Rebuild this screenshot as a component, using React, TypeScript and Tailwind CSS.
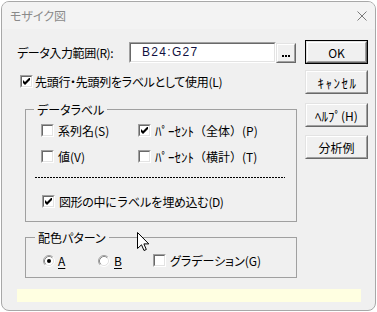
import React from "react";

function Check({ checked = false }: { checked?: boolean }) {
  return (
    <span className="flex h-[13px] w-[13px] shrink-0 border border-t-[#a0a0a0] border-l-[#a0a0a0] border-r-white border-b-white">
      <span className="flex flex-1 items-center justify-center border border-t-[#696969] border-l-[#696969] border-r-[#e3e3e3] border-b-[#e3e3e3] bg-white">
        {checked ? (
          <svg width="7" height="7" viewBox="0 0 7 7">
            <polygon points="0,2 2,4 7,-1 7,2 2,7 0,5" fill="#000" />
          </svg>
        ) : null}
      </span>
    </span>
  );
}

function Radio({ checked = false }: { checked?: boolean }) {
  return (
    <svg width="12" height="12" viewBox="0 0 12 12" className="shrink-0">
      <circle cx="6" cy="6" r="4.5" fill="#fff" />
      <path d="M2.11 9.89 A5.5 5.5 0 0 1 9.89 2.11" fill="none" stroke="#a0a0a0" />
      <path d="M9.89 2.11 A5.5 5.5 0 0 1 2.11 9.89" fill="none" stroke="#ffffff" />
      <path d="M2.82 9.18 A4.5 4.5 0 0 1 9.18 2.82" fill="none" stroke="#8a8a8a" />
      <path d="M9.18 2.82 A4.5 4.5 0 0 1 2.82 9.18" fill="none" stroke="#e3e3e3" />
      {checked ? <circle cx="6" cy="6" r="2" fill="#000" /> : null}
    </svg>
  );
}

function Btn({
  children,
  def = false,
  className = "",
}: {
  children?: React.ReactNode;
  def?: boolean;
  className?: string;
}) {
  const face = (
    <div className="flex h-full w-full border border-t-[#e3e3e3] border-l-[#e3e3e3] border-r-[#696969] border-b-[#696969]">
      <div className="flex flex-1 items-center justify-center border border-t-white border-l-white border-r-[#a0a0a0] border-b-[#a0a0a0] bg-[#f0f0f0]">
        {children}
      </div>
    </div>
  );
  return def ? (
    <div className={"border border-black " + className}>{face}</div>
  ) : (
    <div className={className}>{face}</div>
  );
}

export default function App() {
  return (
    <div className="relative h-[312px] w-[377px] overflow-hidden bg-white text-[12px] leading-[13px] text-black [font-family:'Noto_Sans_CJK_JP',sans-serif]">
      <div className="ml-[1px] mt-[1px] flex h-[310px] w-[375px] flex-col overflow-hidden rounded-[8px] border border-[#a8a8a8] bg-[#f0f0f0]">
        {/* title bar */}
        <div className="flex h-[27px] shrink-0 items-center justify-between bg-[#f3f3f3] pl-[8px] pr-[8px]">
          <span className="text-[#8a8a8a] [font-feature-settings:'palt']">モザイク図</span>
          <svg width="10" height="10" viewBox="0 0 10 10">
            <path d="M0.5 0.5 L9.5 9.5 M9.5 0.5 L0.5 9.5" stroke="#7a7a7a" strokeWidth="1" />
          </svg>
        </div>

        {/* body */}
        <div className="flex flex-col pl-[15px] pt-[11px]">
          <div className="flex">
            {/* left column */}
            <div className="flex w-[288px] flex-col">
              <div className="flex h-[24px] items-start">
                <span className="w-[112px] self-center tracking-[-0.4px] [font-feature-settings:'palt']">データ入力範囲(R):</span>
                <div className="mt-[2px] flex h-[21px] w-[147px] border border-t-[#a0a0a0] border-l-[#a0a0a0] border-r-white border-b-white">
                  <div className="flex flex-1 items-center border border-t-[#696969] border-l-[#696969] border-r-[#e3e3e3] border-b-[#e3e3e3] bg-white pl-[11px]">
                    <span className="text-[12px] tracking-[1.3px] text-[#101040] [font-family:'Liberation_Sans',sans-serif]">
                      B24:G27
                    </span>
                  </div>
                </div>
                <Btn className="mt-[3px] h-[20px] w-[20px]">
                  <div className="flex h-full w-full items-end justify-center gap-[1px] pb-[4px]">
                    <span className="h-[2px] w-[2px] bg-black" />
                    <span className="h-[2px] w-[2px] bg-black" />
                    <span className="h-[2px] w-[2px] bg-black" />
                  </div>
                </Btn>
              </div>

              <div className="mt-[11px] flex h-[13px] items-center pl-[3px]">
                <Check checked />
                <span className="ml-[2px] tracking-[-0.3px] [font-feature-settings:'palt']">先頭行・先頭列をラベルとして使用(L)</span>
              </div>

              {/* データラベル */}
              <fieldset className="ml-[8px] mt-[14px] w-[272px] border border-[#a0a0a0] p-0">
                <legend className="ml-[8px] px-[3px] leading-[15px] [font-feature-settings:'palt']">データラベル</legend>
                <div className="flex flex-col pb-[13px] pt-[7px]">
                  <div className="flex h-[13px] items-center pl-[15px]">
                    <div className="flex w-[97px] items-center">
                      <Check />
                      <span className="ml-[4px]">系列名(S)</span>
                    </div>
                    <div className="flex items-center">
                      <Check checked />
                      <span className="ml-[4px]">
                        <span className="text-[13px]">ﾊﾟｰｾﾝﾄ</span>（全体）(P)
                      </span>
                    </div>
                  </div>
                  <div className="mt-[13px] flex h-[13px] items-center pl-[15px]">
                    <div className="flex w-[97px] items-center">
                      <Check />
                      <span className="ml-[4px]">値(V)</span>
                    </div>
                    <div className="flex items-center">
                      <Check />
                      <span className="ml-[4px]">
                        <span className="text-[13px]">ﾊﾟｰｾﾝﾄ</span>（横計）(T)
                      </span>
                    </div>
                  </div>
                  <div className="ml-[9px] mt-[14px] h-[1px] w-[250px] bg-[repeating-linear-gradient(90deg,#000_0px,#000_2px,transparent_2px,transparent_3px)]" />
                  <div className="mt-[17px] flex h-[13px] items-center pl-[16px]">
                    <Check checked />
                    <span className="ml-[4px] tracking-[-0.5px]">図形の中にラベルを埋め込む(D)</span>
                  </div>
                </div>
              </fieldset>

              {/* 配色パターン */}
              <fieldset className="ml-[8px] mt-[8px] w-[272px] border border-[#a0a0a0] p-0">
                <legend className="ml-[9px] px-[3px] leading-[15px] [font-feature-settings:'palt']">配色パターン</legend>
                <div className="flex h-[32px] items-start pl-[17px] pt-[9px]">
                  <div className="flex h-[13px] items-center">
                    <div className="flex w-[55px] items-center">
                      <Radio checked />
                      <span className="ml-[3px] underline underline-offset-[2px]">A</span>
                    </div>
                    <div className="flex w-[55px] items-center">
                      <Radio />
                      <span className="ml-[4px] underline underline-offset-[2px]">B</span>
                    </div>
                    <div className="flex items-center">
                      <Check />
                      <span className="ml-[4px] [font-feature-settings:'palt']">グラデーション(G)</span>
                    </div>
                  </div>
                </div>
              </fieldset>
            </div>

            {/* right column */}
            <div className="flex w-[63px] flex-col">
              <Btn def className="h-[24px] w-[63px]">
                <span>OK</span>
              </Btn>
              <Btn className="mt-[6px] h-[24px] w-[63px]">
                <span className="pl-[2px] text-[13px] tracking-[1.5px]">ｷｬﾝｾﾙ</span>
              </Btn>
              <Btn className="mt-[9px] h-[24px] w-[63px]">
                <span>
                  <span className="text-[13px]">ﾍﾙﾌﾟ</span>(H)
                </span>
              </Btn>
              <Btn className="mt-[8px] h-[24px] w-[63px]">
                <span>分析例</span>
              </Btn>
            </div>
          </div>

          <div className="mt-[11px] h-[13px] w-[344px] bg-[#ffffe1]" />
        </div>
      </div>

      {/* mouse pointer */}
      <svg className="absolute left-[137px] top-[232px]" width="13" height="20" viewBox="0 0 13 20">
        <path
          d="M0.5 0.5 L0.5 16.5 L4.5 12.8 L7 18.5 L9.3 17.5 L6.9 11.9 L11.8 11.9 Z"
          fill="#fff"
          stroke="#000"
          strokeWidth="1"
          strokeLinejoin="miter"
        />
      </svg>
    </div>
  );
}
